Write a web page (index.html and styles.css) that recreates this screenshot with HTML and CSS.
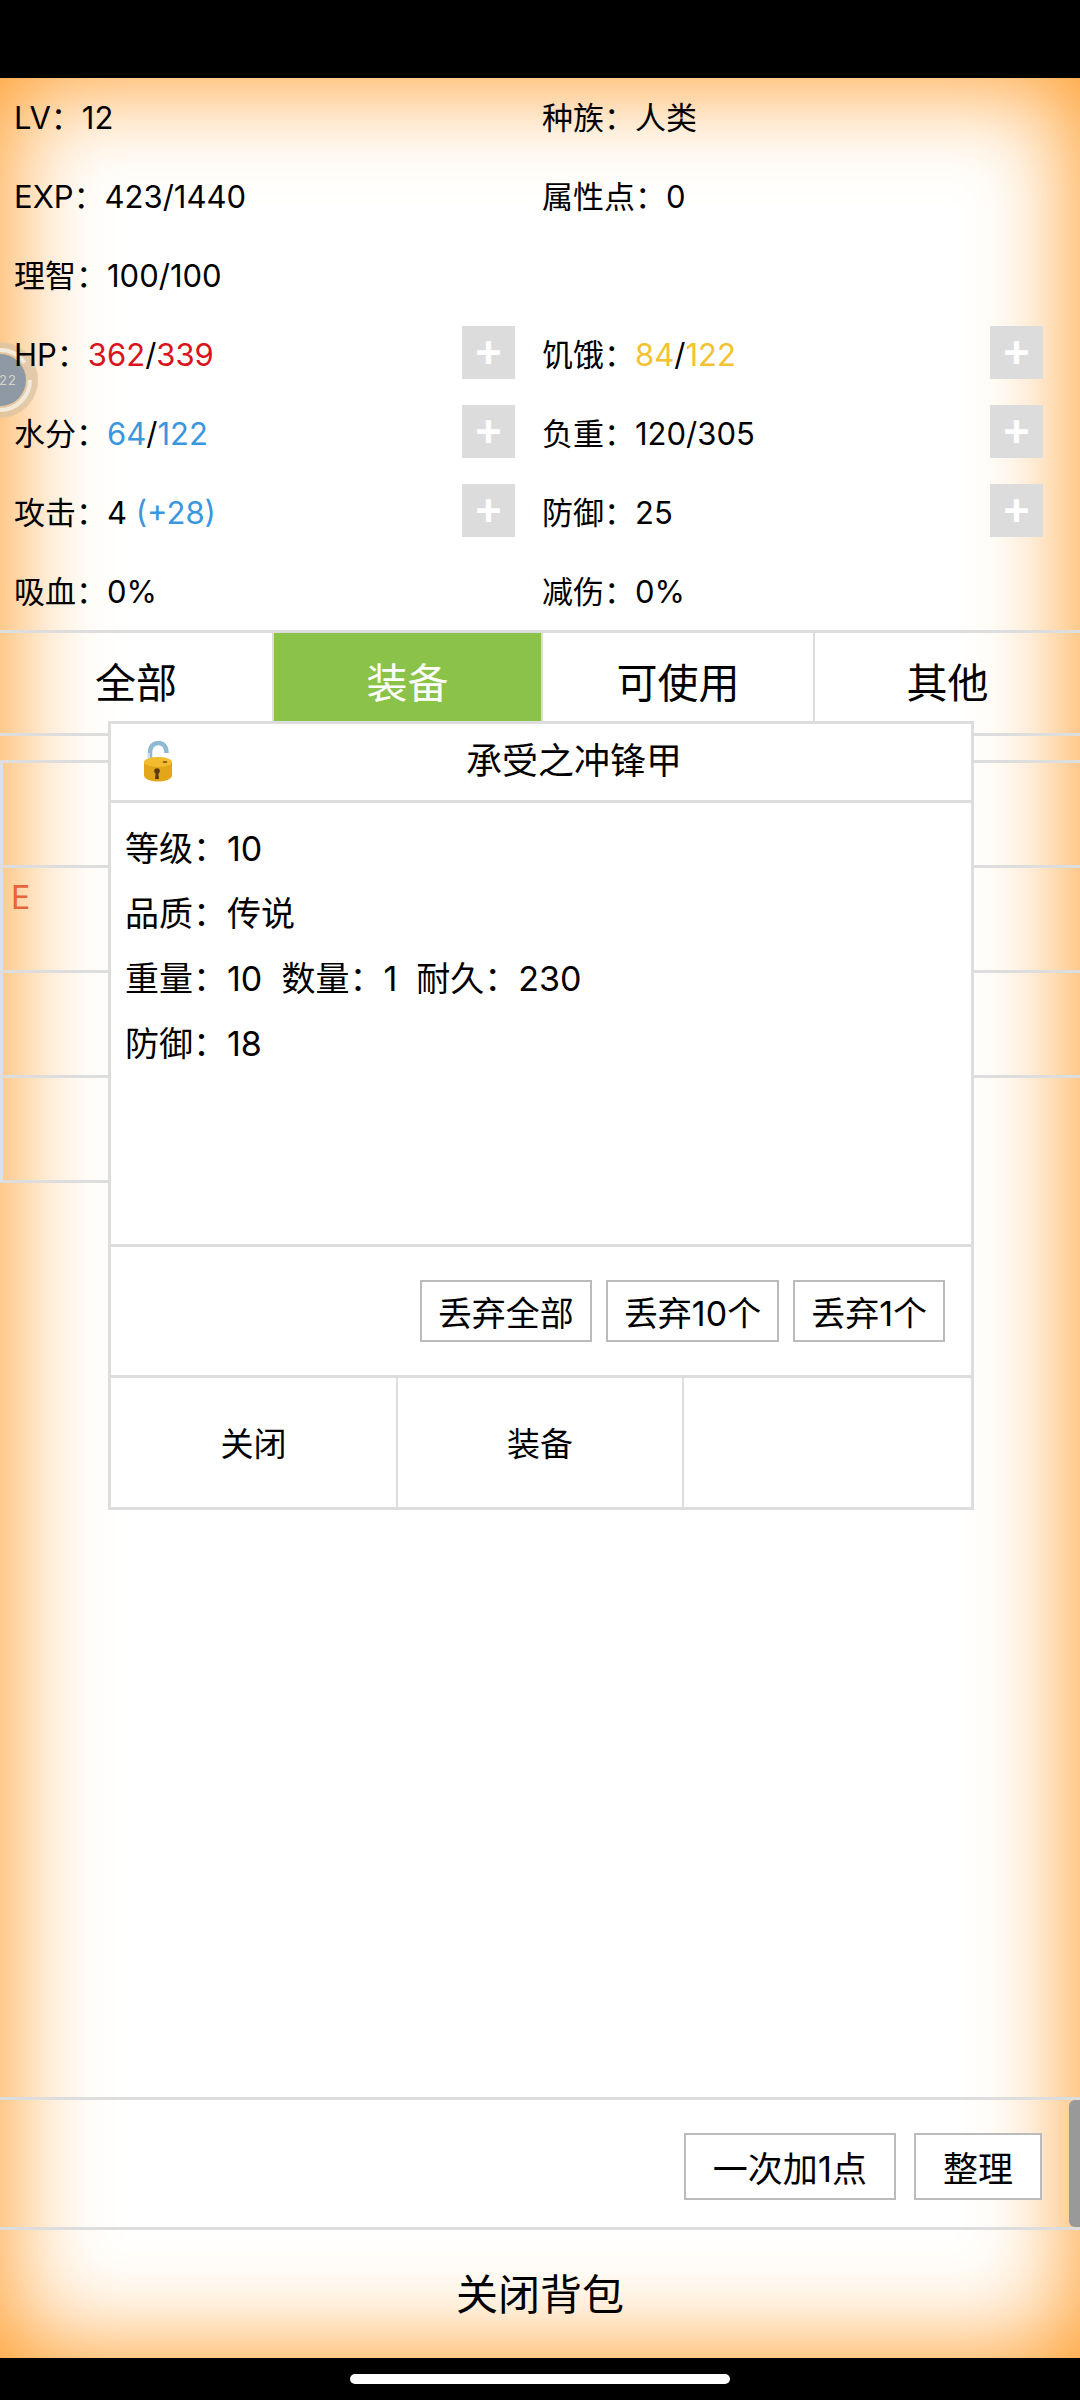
FILE: index.html
```html
<!DOCTYPE html>
<html lang="zh">
<head>
  <meta charset="UTF-8">
  <meta name="viewport" content="width=device-width, initial-scale=1.0">
  <title>背包</title>
  <link rel="stylesheet" href="styles.css">
</head>
<body>
  <div class="status-bar"></div>

  <div class="screen">
    <!-- floating ball, half off screen -->
    <svg class="ball" width="40" height="80" viewBox="0 0 40 80">
      <circle cx="0" cy="40" r="38" fill="#d9c3a3" opacity="0.75"/>
      <circle cx="0" cy="40" r="30" fill="none" stroke="#f4ead9" stroke-width="4" stroke-dasharray="70 30"/>
      <circle cx="0" cy="40" r="26" fill="#8e99a5"/>
      <text x="-1" y="45" font-size="13" letter-spacing="1" fill="#d8d4c8" font-family="Inter, sans-serif">22</text>
    </svg>

    <div class="stats">
      <div class="stat">LV：12</div>
      <div class="stat right">种族：人类</div>
      <div class="stat">EXP：423/1440</div>
      <div class="stat right">属性点：0</div>
      <div class="stat">理智：100/100</div>
      <div class="stat right"></div>
      <div class="stat"><span>HP：<i class="red">362</i>/<i class="red">339</i></span><b class="plus">+</b></div>
      <div class="stat right"><span>饥饿：<i class="yellow">84</i>/<i class="yellow">122</i></span><b class="plus">+</b></div>
      <div class="stat"><span>水分：<i class="blue">64</i>/<i class="blue">122</i></span><b class="plus">+</b></div>
      <div class="stat right"><span>负重：120/305</span><b class="plus">+</b></div>
      <div class="stat"><span>攻击：4 <i class="blue">(+28)</i></span><b class="plus">+</b></div>
      <div class="stat right"><span>防御：25</span><b class="plus">+</b></div>
      <div class="stat">吸血：0%</div>
      <div class="stat right">减伤：0%</div>
    </div>

    <div class="tabs">
      <div class="tab">全部</div>
      <div class="tab active">装备</div>
      <div class="tab">可使用</div>
      <div class="tab">其他</div>
    </div>

    <div class="items">
      <div class="cell"></div>
      <div class="cell"><span class="grade">E</span></div>
      <div class="cell"></div>
      <div class="cell"></div>
    </div>

    <div class="toolbar">
      <button class="btn big">一次加1点</button>
      <button class="btn big">整理</button>
      <div class="scroll-thumb"></div>
    </div>
    <div class="close-bag">关闭背包</div>

    <div class="modal">
      <div class="modal-head">
        <svg class="lock" width="30" height="42" viewBox="0 0 30 42">
          <path d="M7 22V12C7 5 11 2 15.500 2C20 2 23.500 5 23.500 12" fill="none" stroke="#8db9d2" stroke-width="4.500"/>
          <path d="M6 21V12" fill="none" stroke="#dfeef5" stroke-width="1.500"/>
          <path d="M1 21V34C1 38 7 40.500 15 40.500C23 40.500 29 38 29 34V21Z" fill="#e3a51a"/>
          <ellipse cx="15" cy="21" rx="14" ry="5" fill="#f2bc2e"/>
          <ellipse cx="22" cy="21" rx="2.500" ry="1" fill="#8a5a10"/>
          <circle cx="14" cy="30" r="2.800" fill="#5b3a10"/>
          <path d="M12.800 31H15.200L16 38H12Z" fill="#5b3a10"/>
        </svg>
        <span class="modal-title">承受之冲锋甲</span>
      </div>
      <div class="modal-body">
        <p>等级：10</p>
        <p>品质：传说</p>
        <p>重量：10&nbsp; 数量：1&nbsp; 耐久：230</p>
        <p>防御：18</p>
      </div>
      <div class="modal-drop">
        <button class="btn">丢弃全部</button>
        <button class="btn">丢弃10个</button>
        <button class="btn">丢弃1个</button>
      </div>
      <div class="modal-actions">
        <div class="action">关闭</div>
        <div class="action">装备</div>
        <div class="action"></div>
      </div>
    </div>
  </div>

  <div class="nav-bar"><div class="home-pill"></div></div>
</body>
</html>
```

FILE: styles.css
```css
* {
  box-sizing: border-box;
}

body {
  margin: 0;
  width: 1080px;
  height: 2400px;
  background-color: #000;
  color: #000;
  font-family: Inter, "Noto Sans CJK SC", sans-serif;
  font-size: 31px;
  display: flex;
  flex-direction: column;
  overflow: hidden;
}

.status-bar {
  height: 78px;
}

.nav-bar {
  height: 42px;
  padding-top: 16px;
  display: flex;
  justify-content: center;
}

.home-pill {
  width: 380px;
  height: 10px;
  border-radius: 5px;
  background-color: #fff;
}

.screen {
  position: relative;
  flex: 1;
  display: flex;
  flex-direction: column;
  background-color: #fff;
  box-shadow: inset 0 0 100px 6px #ff9a25;
}

.stats {
  position: relative;
  display: grid;
  grid-template-columns: 540px 540px;
  grid-auto-rows: 79px;
  height: 554px;
  margin-top: -2px;
}

.stat {
  display: flex;
  align-items: center;
  justify-content: space-between;
  padding: 0 25px 0 14px;
}

.stat.right {
  padding: 0 37px 0 2px;
}

.stat i {
  font-style: normal;
}

.red {
  color: #d9141c;
}

.yellow {
  color: #f2c230;
}

.blue {
  color: #3a97dd;
}

.plus {
  width: 53px;
  height: 53px;
  padding-bottom: 7px;
  display: flex;
  align-items: center;
  justify-content: center;
  background-color: #dcdcdc;
  color: #fff;
  font-size: 46px;
  font-weight: 600;
  line-height: 1;
}

.tabs {
  display: grid;
  grid-template-columns: 272px 269px 272px 1fr;
  height: 106px;
  border-top: 3px solid #ddd;
  border-bottom: 3px solid #ddd;
}

.tab {
  display: flex;
  align-items: center;
  justify-content: center;
  padding-bottom: 6px;
  border-left: 2px solid #ddd;
  font-size: 41px;
}

.tab:first-child {
  border-left: 0;
}

.tab.active {
  background-color: #8bc34a;
  color: #fff;
}

.items {
  margin-top: 24px;
  flex: 1;
  border-top: 3px solid #ddd;
}

.cell {
  height: 105px;
  padding: 10px 8px;
  border-bottom: 3px solid #ddd;
  border-left: 3px solid #d9e2ea;
}

.cell:last-child {
  width: 300px;
}

.grade {
  color: #e8623a;
  font-size: 32px;
}

.btn {
  background-color: #fff;
  border: 2px solid #bbb;
  color: #000;
  font-family: inherit;
  font-size: 34px;
  height: 62px;
  padding: 0 16px;
  white-space: nowrap;
}

.btn.big {
  height: 67px;
  font-size: 35px;
  padding: 0 27px;
}

.toolbar {
  position: relative;
  height: 133px;
  padding: 6px 38px 0 0;
  display: flex;
  align-items: center;
  justify-content: flex-end;
  gap: 18px;
  border-top: 3px solid #ddd;
  border-bottom: 3px solid #ddd;
}

.scroll-thumb {
  position: absolute;
  top: 0;
  right: 0;
  width: 11px;
  height: 127px;
  border-radius: 6px 0 0 6px;
  background-color: #999;
}

.close-bag {
  height: 128px;
  padding-bottom: 5px;
  display: flex;
  align-items: center;
  justify-content: center;
  font-size: 42px;
}

.ball {
  position: absolute;
  left: 0;
  top: 262px;
}

.modal {
  position: absolute;
  top: 643px;
  left: 108px;
  width: 866px;
  height: 789px;
  display: flex;
  flex-direction: column;
  background-color: #fff;
  border: 3px solid #ddd;
}

.modal-head {
  position: relative;
  height: 79px;
  padding: 0 0 9px 66px;
  display: flex;
  align-items: center;
  justify-content: center;
  border-bottom: 3px solid #ddd;
}

.lock {
  position: absolute;
  left: 32px;
  top: 17px;
}

.modal-title {
  font-size: 36px;
}

.modal-body {
  flex: 1;
  padding: 13px 14px;
  font-size: 34px;
  border-bottom: 3px solid #ddd;
}

.modal-body p {
  margin: 0;
  height: 65px;
  line-height: 65px;
}

.modal-drop {
  height: 131px;
  display: flex;
  align-items: center;
  justify-content: flex-end;
  gap: 14px;
  padding-right: 26px;
  border-bottom: 3px solid #ddd;
}

.modal-actions {
  height: 129px;
  display: grid;
  grid-template-columns: 285px 286px 1fr;
}

.action {
  display: flex;
  align-items: center;
  justify-content: center;
  padding-bottom: 2px;
  font-size: 33px;
  border-left: 2px solid #ddd;
}

.action:first-child {
  border-left: 0;
}
```
